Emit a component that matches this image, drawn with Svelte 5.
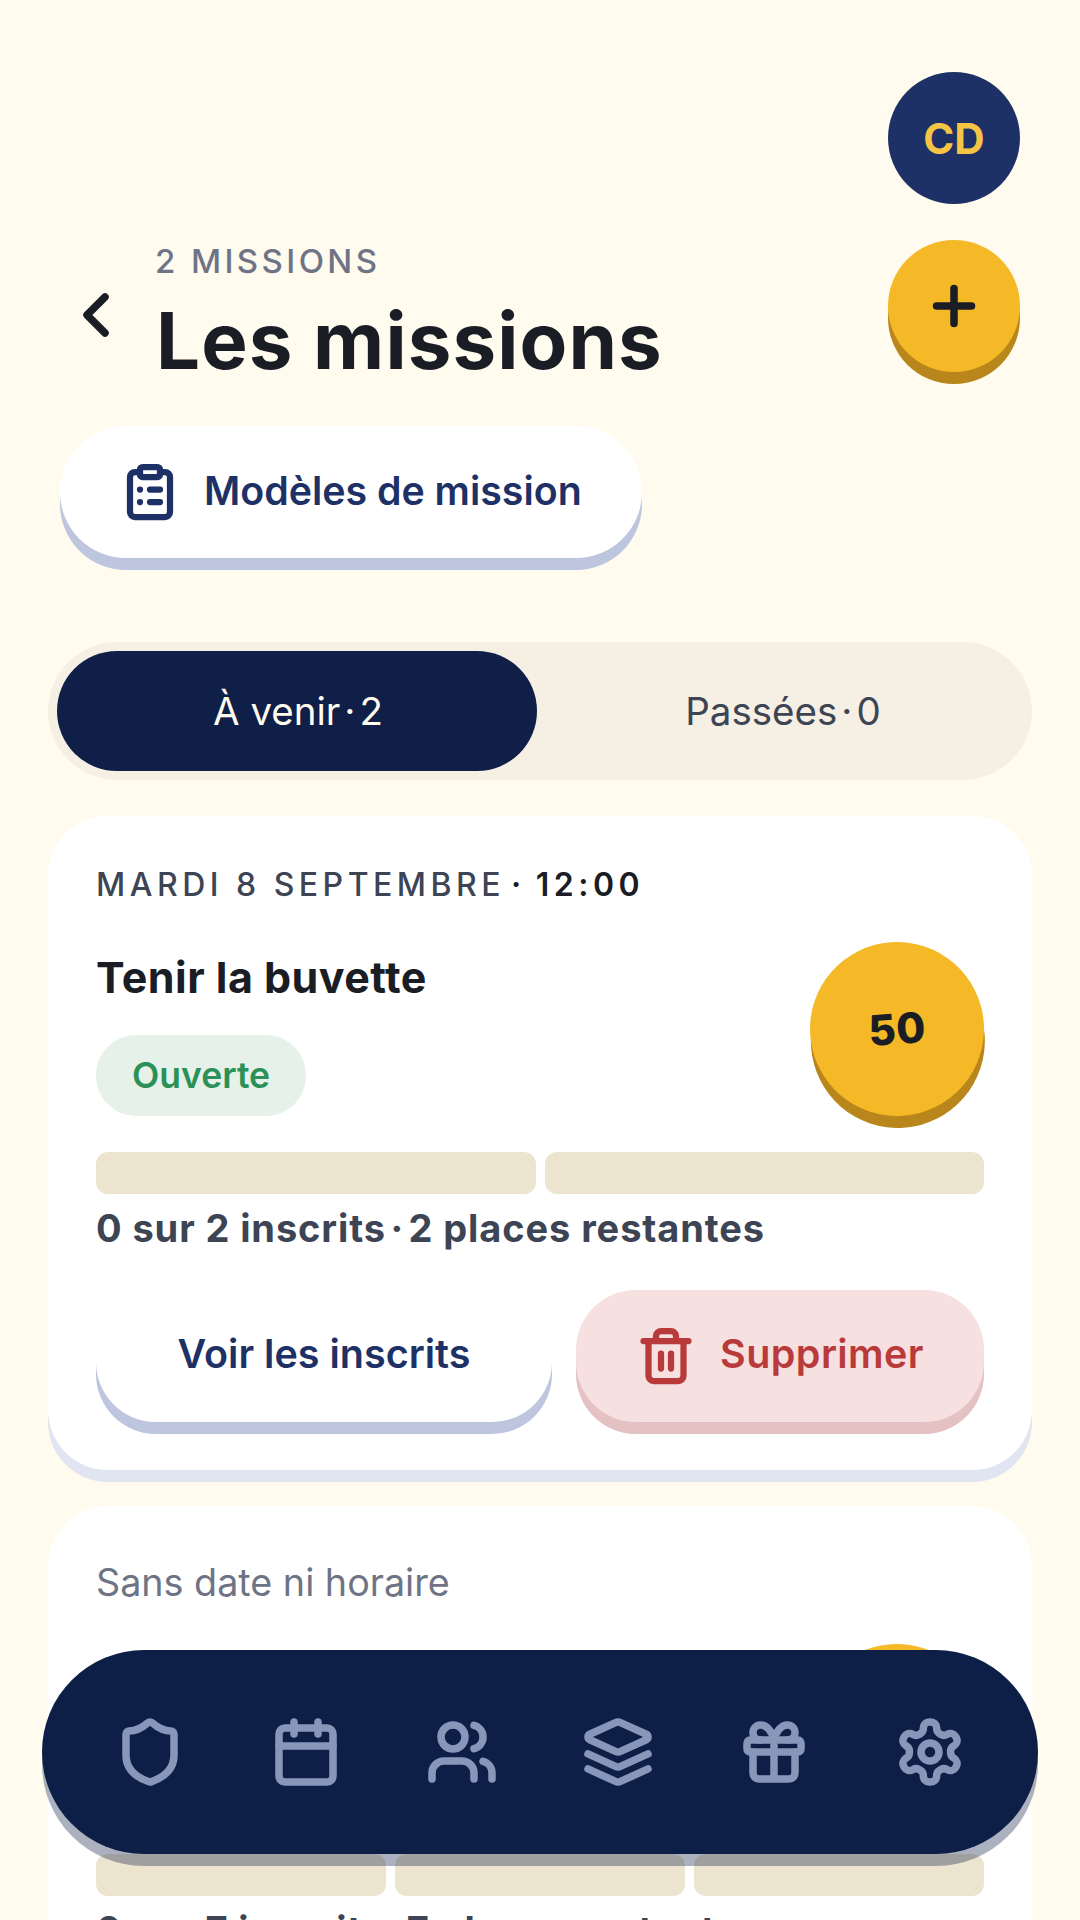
<script>
  const tabs = [
    { label: 'À venir', n: 2, on: true },
    { label: 'Passées', n: 0, on: false }
  ];
</script>

<div class="page">
  <div class="top"><div class="avatar">CD</div></div>

  <header class="head">
    <svg class="back" viewBox="0 0 24 24"><path d="m15 18-6-6 6-6" /></svg>
    <div class="titles">
      <div class="kicker">2 MISSIONS</div>
      <h1>Les missions</h1>
    </div>
    <button class="fab" aria-label="Ajouter">
      <svg viewBox="0 0 24 24"><path d="M5 12h14M12 5v14" /></svg>
    </button>
  </header>

  <button class="models">
    <svg viewBox="0 0 24 24">
      <rect x="8" y="2" width="8" height="4" rx="1" />
      <path d="M16 4h2a2 2 0 0 1 2 2v14a2 2 0 0 1-2 2H6a2 2 0 0 1-2-2V6a2 2 0 0 1 2-2h2" />
      <path d="M12 11h4M12 16h4M8 11h.01M8 16h.01" />
    </svg>
    <span>Modèles de mission</span>
  </button>

  <div class="seg">
    {#each tabs as t}
      <div class="tab" class:on={t.on}>{t.label}<i>·</i>{t.n}</div>
    {/each}
  </div>

  <article class="card">
    <div class="date">MARDI 8 SEPTEMBRE<b class="dot">·</b><b>12:00</b></div>
    <div class="row">
      <div class="left">
        <h2>Tenir la buvette</h2>
        <span class="badge">Ouverte</span>
      </div>
      <div class="coin"><span>50</span></div>
    </div>
    <div class="bars"><i></i><i></i></div>
    <p class="count">0 sur 2 inscrits<i>·</i>2 places restantes</p>
    <div class="actions">
      <button class="see"><span>Voir les inscrits</span></button>
      <button class="del">
        <svg viewBox="0 0 24 24">
          <path d="M3 6h18M19 6v14c0 1-1 2-2 2H7c-1 0-2-1-2-2V6M8 6V4c0-1 1-2 2-2h4c1 0 2 1 2 2v2M10 11v6M14 11v6" />
        </svg>
        <span>Supprimer</span>
      </button>
    </div>
  </article>

  <article class="card second">
    <div class="nodate">Sans date ni horaire</div>
    <div class="row">
      <div class="left"></div>
      <div class="coin"></div>
    </div>
    <div class="bars"><i></i><i></i><i></i></div>
    <p class="count">0 sur 7 inscrits<i>·</i>7 places restantes</p>
  </article>

  <nav class="nav">
    <svg viewBox="0 0 24 24"><path d="M20 13c0 5-3.500 7.500-7.660 8.950a1 1 0 0 1-.67-.01C7.500 20.500 4 18 4 13V6a1 1 0 0 1 1-1c2 0 4.500-1.200 6.240-2.720a1.170 1.170 0 0 1 1.520 0C14.510 3.810 17 5 19 5a1 1 0 0 1 1 1z" /></svg>
    <svg viewBox="0 0 24 24"><path d="M8 2v4M16 2v4" /><rect x="3" y="4" width="18" height="18" rx="2" /><path d="M3 10h18" /></svg>
    <svg viewBox="0 0 24 24"><path d="M16 21v-2a4 4 0 0 0-4-4H6a4 4 0 0 0-4 4v2" /><circle cx="9" cy="7" r="4" /><path d="M22 21v-2a4 4 0 0 0-3-3.870M16 3.130a4 4 0 0 1 0 7.750" /></svg>
    <svg viewBox="0 0 24 24"><path d="m12.830 2.180a2 2 0 0 0-1.660 0L2.600 6.080a1 1 0 0 0 0 1.830l8.580 3.910a2 2 0 0 0 1.660 0l8.580-3.900a1 1 0 0 0 0-1.830Z" /><path d="m22 17.650-9.170 4.160a2 2 0 0 1-1.660 0L2 17.650" /><path d="m22 12.650-9.170 4.160a2 2 0 0 1-1.660 0L2 12.650" /></svg>
    <svg viewBox="0 0 24 24"><rect x="3" y="8" width="18" height="4" rx="1" /><path d="M12 8v13M19 12v7a2 2 0 0 1-2 2H7a2 2 0 0 1-2-2v-7" /><path d="M7.500 8a2.500 2.500 0 0 1 0-5A4.800 8 0 0 1 12 8a4.800 8 0 0 1 4.500-5 2.500 2.500 0 0 1 0 5" /></svg>
    <svg viewBox="0 0 24 24"><path d="M12.220 2h-.44a2 2 0 0 0-2 2v.18a2 2 0 0 1-1 1.730l-.43.25a2 2 0 0 1-2 0l-.15-.08a2 2 0 0 0-2.730.73l-.22.38a2 2 0 0 0 .73 2.730l.15.1a2 2 0 0 1 1 1.720v.51a2 2 0 0 1-1 1.740l-.15.09a2 2 0 0 0-.73 2.730l.22.38a2 2 0 0 0 2.730.73l.15-.08a2 2 0 0 1 2 0l.43.25a2 2 0 0 1 1 1.730V20a2 2 0 0 0 2 2h.44a2 2 0 0 0 2-2v-.18a2 2 0 0 1 1-1.730l.43-.25a2 2 0 0 1 2 0l.15.08a2 2 0 0 0 2.730-.73l.22-.39a2 2 0 0 0-.73-2.730l-.15-.08a2 2 0 0 1-1-1.740v-.5a2 2 0 0 1 1-1.740l.15-.09a2 2 0 0 0 .73-2.730l-.22-.38a2 2 0 0 0-2.730-.73l-.15.08a2 2 0 0 1-2 0l-.43-.25a2 2 0 0 1-1-1.730V4a2 2 0 0 0-2-2z" /><circle cx="12" cy="12" r="3" /></svg>
  </nav>
</div>

<style>
  :global(body) { background: #fffbef; }
  .page {
    position: relative;
    width: 1080px;
    height: 1920px;
    overflow: hidden;
    background: #fffbef;
    font-family: Inter, "Liberation Sans", sans-serif;
    color: #1a1d24;
  }
  svg { fill: none; stroke: currentColor; stroke-width: 2.5; stroke-linecap: round; stroke-linejoin: round; flex: none; display: block; }
  button { font-family: inherit; border: 0; padding: 0; margin: 0; }
  .top { display: flex; justify-content: flex-end; padding: 72px 60px 0; }
  .avatar {
    width: 132px; height: 132px; border-radius: 50%;
    background: #1e3166; color: #f6c445;
    display: flex; align-items: center; justify-content: center;
    font-size: 42px; font-weight: 700;
  }
  .head { display: flex; align-items: flex-start; padding: 36px 60px 0; height: 132px; }
  .back { width: 72px; height: 72px; margin-top: 39px; margin-right: 24px; color: #1a1d24; }
  .titles { flex: 1; }
  .kicker { font-size: 33px; line-height: 42px; letter-spacing: 3.400px; font-weight: 500; color: #6e7485; margin-left: -1px; }
  h1 { margin: 11px 0 0; font-size: 78px; line-height: 96px; font-weight: 700; letter-spacing: 1.100px; white-space: nowrap; }
  .fab {
    width: 132px; height: 132px; border-radius: 50%;
    background: #f5b827; box-shadow: 0 12px 0 #b8861b; color: #1a1d24;
    display: flex; align-items: center; justify-content: center;
  }
  .fab svg { width: 60px; height: 60px; stroke-width: 3; }
  .models {
    display: flex; align-items: center; gap: 24px;
    margin: 54px 0 0 60px; padding: 0 60px; height: 132px;
    border-radius: 66px; background: #fff; box-shadow: 0 12px 0 #bdc6de;
    color: #1e3166; font-size: 39.300px; font-weight: 600;
  }
  .models span { position: relative; top: -2px; }
  .models svg { width: 60px; height: 60px; }
  .seg {
    display: flex; margin: 84px 48px 0; padding: 9px; height: 138px; box-sizing: border-box;
    border-radius: 69px; background: #f6f0e4;
  }
  .tab {
    flex: 1; display: flex; align-items: center; justify-content: center;
    border-radius: 60px; font-size: 38.500px; color: #3d4454; padding-left: 6px;
  }
  .tab i { font-style: normal; margin: 0 4px; }
  .tab.on { flex: none; width: 480px; padding-left: 2px; box-sizing: border-box; background: #0f1f47; color: #fffbef; }
  .card {
    margin: 36px 48px 0; padding: 48px; height: 654px; box-sizing: border-box;
    border-radius: 60px; background: #fff; box-shadow: 0 12px 0 #e1e5f1;
  }
  .date { font-size: 32px; line-height: 42px; letter-spacing: 4.500px; font-weight: 500; color: #3d4454; white-space: nowrap; }
  .date b { font-weight: 600; color: #1a1d24; }
  .date .dot { margin: 0 10px 0 6px; }
  .row { display: flex; justify-content: space-between; height: 174px; margin: 36px 0; }
  h2 { margin: 0; font-size: 43px; line-height: 54px; font-weight: 700; padding-top: 8px; letter-spacing: .45px; }
  .badge {
    display: inline-block; margin-top: 31px; padding: 0 36px; height: 81px; line-height: 81px;
    border-radius: 40px; background: #e6f1ea; color: #2b9157; font-size: 35.500px; font-weight: 600;
  }
  .coin {
    width: 174px; height: 174px; border-radius: 50%;
    background: #f5b827; box-shadow: 0 12px 0 #b8861b;
    transform: rotate(-4deg);
    display: flex; align-items: center; justify-content: center;
    font-size: 42px; font-weight: 800; color: #1a1d24; letter-spacing: .5px;
  }
  .coin span { position: relative; top: -1px; }
  .bars { display: flex; gap: 9px; height: 42px; }
  .bars i { flex: 1; border-radius: 12px; background: #ede4cf; }
  .count { margin: 12px 0 0; font-size: 38px; line-height: 44px; font-weight: 700; color: #3d4454; letter-spacing: .9px; white-space: nowrap; }
  .count i { font-style: normal; margin: 0 4.500px; }
  .actions { display: flex; gap: 24px; margin-top: 40px; }
  .actions button {
    height: 132px; border-radius: 60px; font-size: 39.500px; font-weight: 600;
    display: flex; align-items: center; justify-content: center; gap: 24px;
  }
  .actions span { position: relative; top: -2px; }
  .see { width: 456px; background: #fff; color: #1e3166; box-shadow: 0 12px 0 #bdc6de; }
  .del { width: 408px; background: #f6e0e0; color: #b93a3a; box-shadow: 0 12px 0 #e4c2c4; }
  .del span { letter-spacing: .4px; }
  .del svg { width: 60px; height: 60px; }
  .second { height: 700px; }
  .nodate { font-size: 37.700px; line-height: 54px; color: #6e7485; position: relative; top: 1px; }
  .nav {
    position: absolute; left: 42px; right: 42px; bottom: 66px; height: 204px;
    display: flex; align-items: center; justify-content: space-between;
    padding: 0 72px; box-sizing: border-box;
    border-radius: 102px; background: #0e1f47; box-shadow: 0 12px 0 rgba(15, 31, 71, .35);
    color: #8896b9;
  }
  .nav svg { width: 72px; height: 72px; }
</style>
